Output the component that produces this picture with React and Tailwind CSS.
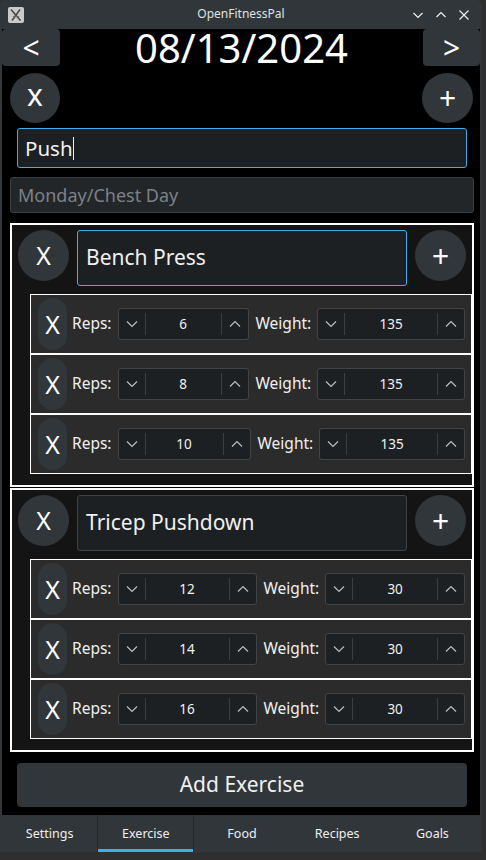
const groups = [
  {
    name: "Bench Press",
    focused: true,
    sets: [
      { reps: 6, weight: 135, repsW: 131 },
      { reps: 8, weight: 135, repsW: 131 },
      { reps: 10, weight: 135, repsW: 133 },
    ],
  },
  {
    name: "Tricep Pushdown",
    focused: false,
    sets: [
      { reps: 12, weight: 30, repsW: 139 },
      { reps: 14, weight: 30, repsW: 139 },
      { reps: 16, weight: 30, repsW: 139 },
    ],
  },
]

const tabs = ["Settings", "Exercise", "Food", "Recipes", "Goals"]

function Chevron({ up }) {
  return (
    <svg width="12" height="8" viewBox="0 0 12 8" fill="none" stroke="#b9bdc1" strokeWidth="1.2">
      <path d={up ? "M1 6.5 6 1.5l5 5" : "M1 1.5l5 5 5-5"} />
    </svg>
  )
}

function SpinBox({ value, width }) {
  return (
    <div
      className={"h-[32px] flex items-stretch rounded-[3px] border border-[#3f4448] bg-[#1d2023] " + (width ? "" : "flex-1")}
      style={width ? { width } : undefined}
    >
      <div className="w-[27px] flex items-center justify-center border-r border-[#3a3f44] my-[4px]">
        <Chevron />
      </div>
      <div className="flex-1 flex items-center justify-center text-[13.5px] text-[#eff0f1]">{value}</div>
      <div className="w-[27px] flex items-center justify-center border-l border-[#3a3f44] my-[4px]">
        <Chevron up />
      </div>
    </div>
  )
}

function SetRow({ s }) {
  return (
    <div className="h-[60px] border border-white bg-[#2b2b2b] flex items-center pl-[7px] pr-[6px]">
      <button className="w-[29px] h-[52px] rounded-full bg-[#31363b] text-white text-[25px] leading-none flex items-center justify-center">X</button>
      <span className="ml-[5px] text-[15.5px] text-[#eff0f1]">Reps:</span>
      <div className="ml-[6px]">
        <SpinBox value={s.reps} width={s.repsW} />
      </div>
      <span className="ml-[7px] text-[15.5px] text-[#eff0f1]">Weight:</span>
      <div className="ml-[6px] flex-1 flex">
        <SpinBox value={s.weight} />
      </div>
    </div>
  )
}

function ExerciseGroup({ g }) {
  return (
    <div className="h-[264px] ml-[8px] mr-[6px] border-2 border-white bg-[#141414] flex flex-col">
      <div className="flex items-start gap-[8px] pt-[5px] px-[6px]">
        <button className="w-[51px] h-[51px] shrink-0 rounded-full bg-[#31363b] text-white text-[25px] leading-none flex items-center justify-center">X</button>
        <div className={"flex-1 h-[56px] rounded-[3px] border bg-[#1d2023] flex items-center px-[8px] text-[21px] text-[#eff0f1] " + (g.focused ? "border-[#3daee9]" : "border-[#3f4448]")}>
          {g.name}
        </div>
        <button className="w-[51px] h-[51px] shrink-0 rounded-full bg-[#31363b] text-white text-[30px] leading-none flex items-center justify-center">+</button>
      </div>
      <div className="mt-[8px] ml-[18px] flex flex-col">
        {g.sets.map((s, i) => <SetRow key={i} s={s} />)}
      </div>
    </div>
  )
}

export default function App() {
  return (
    <div className="w-[486px] h-[860px] bg-[#2f2f2f] font-['Noto_Sans',sans-serif]">
      <div className="w-[482px] h-[852px] flex flex-col rounded-t-[6px] overflow-hidden bg-[#31363b]">
        {/* title bar */}
        <div className="h-[29px] shrink-0 flex items-center relative px-[8px]">
          <svg width="16" height="16" viewBox="0 0 16 16">
            <rect width="16" height="16" rx="2" fill="#c9cacb" />
            <path d="M3 2.5 12.5 13.5M12 2.5 4 13.5" stroke="#4a4a4a" strokeWidth="1.6" />
            <path d="M5 9.5h6" stroke="#6a6a6a" strokeWidth="0.8" />
          </svg>
          <span className="absolute left-1/2 top-[6px] -translate-x-1/2 text-[12px] leading-[16px] text-[#dfe1e2]">OpenFitnessPal</span>
          <div className="ml-auto flex items-center gap-[11px] pr-[4px]">
            <svg width="12" height="12" viewBox="0 0 12 12" fill="none" stroke="#eff0f1" strokeWidth="1.2"><path d="M1.5 4 6 8.5 10.5 4" /></svg>
            <svg width="12" height="12" viewBox="0 0 12 12" fill="none" stroke="#eff0f1" strokeWidth="1.2"><path d="M1.5 8 6 3.5 10.5 8" /></svg>
            <svg width="12" height="12" viewBox="0 0 12 12" fill="none" stroke="#eff0f1" strokeWidth="1.2"><path d="M1.5 1.5l9 9M10.5 1.5l-9 9" /></svg>
          </div>
        </div>

        {/* content */}
        <div className="flex-1 mx-[2px] bg-black flex flex-col">
          <div className="h-[37px] flex items-center justify-between">
            <button className="w-[58px] h-full rounded-[4px] bg-[#31363b] text-white text-[30px] leading-none flex items-center justify-center">&lt;</button>
            <span className="text-[40px] leading-[36px] text-white">08/13/2024</span>
            <button className="w-[57px] h-full rounded-[4px] bg-[#31363b] text-white text-[30px] leading-none flex items-center justify-center">&gt;</button>
          </div>

          <div className="mt-[7px] ml-[8px] mr-[7px] flex justify-between">
            <button className="w-[50px] h-[50px] rounded-full bg-[#31363b] text-white text-[30px] leading-none flex items-center justify-center pb-[6px]">x</button>
            <button className="w-[51px] h-[50px] rounded-full bg-[#31363b] text-white text-[30px] leading-none flex items-center justify-center">+</button>
          </div>

          <div className="mt-[5px] ml-[15px] mr-[13px] h-[40px] rounded-[3px] border border-[#3daee9] bg-[#1d2023] flex items-center px-[7px] text-[20.5px] text-[#eff0f1]">
            Push<span className="w-px h-[23px] bg-[#eff0f1]" />
          </div>

          <div className="mt-[9px] ml-[8px] mr-[6px] h-[36px] rounded-[3px] border border-[#3a3f44] bg-[#232629] flex items-center px-[7px] text-[18px] text-[#7c8186]">
            Monday/Chest Day
          </div>

          <div className="mt-[10px] flex flex-col gap-px">
            {groups.map((g, i) => <ExerciseGroup key={i} g={g} />)}
          </div>

          <button className="mt-[11px] ml-[15px] mr-[13px] h-[44px] rounded-[4px] bg-[#31363b] text-[21px] text-[#eff0f1] flex items-center justify-center">
            Add Exercise
          </button>
        </div>

        {/* tab bar */}
        <div className="h-[37px] shrink-0 flex px-[2px]">
          {tabs.map(t => (
            <div
              key={t}
              className={"flex-1 relative flex items-center justify-center pt-[2px] text-[12.5px] text-[#eff0f1] " + (t === "Exercise" ? "border-x border-[#25282b]" : "")}
            >
              {t}
              {t === "Exercise" && <div className="absolute left-0 right-0 bottom-0 h-[3px] bg-[#3daee9]" />}
            </div>
          ))}
        </div>
      </div>
    </div>
  )
}
